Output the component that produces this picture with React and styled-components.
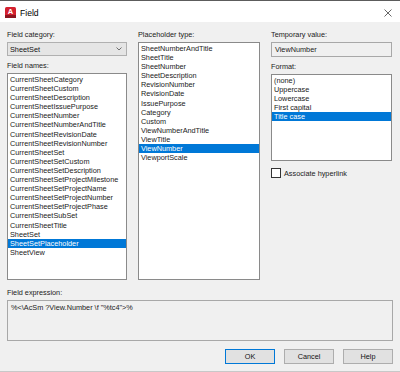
import React from "react";
import styled, { createGlobalStyle } from "styled-components";

const fieldNames = [
  "CurrentSheetCategory",
  "CurrentSheetCustom",
  "CurrentSheetDescription",
  "CurrentSheetIssuePurpose",
  "CurrentSheetNumber",
  "CurrentSheetNumberAndTitle",
  "CurrentSheetRevisionDate",
  "CurrentSheetRevisionNumber",
  "CurrentSheetSet",
  "CurrentSheetSetCustom",
  "CurrentSheetSetDescription",
  "CurrentSheetSetProjectMilestone",
  "CurrentSheetSetProjectName",
  "CurrentSheetSetProjectNumber",
  "CurrentSheetSetProjectPhase",
  "CurrentSheetSubSet",
  "CurrentSheetTitle",
  "SheetSet",
  "SheetSetPlaceholder",
  "SheetView",
];

const placeholderTypes = [
  "SheetNumberAndTitle",
  "SheetTitle",
  "SheetNumber",
  "SheetDescription",
  "RevisionNumber",
  "RevisionDate",
  "IssuePurpose",
  "Category",
  "Custom",
  "ViewNumberAndTitle",
  "ViewTitle",
  "ViewNumber",
  "ViewportScale",
];

const formats = ["(none)", "Uppercase", "Lowercase", "First capital", "Title case"];

function Field() {
  return (
    <Window>
      <GlobalStyle />
      <TitleBar>
        <AppIcon viewBox="0 0 11 11">
          <rect x="0" y="0" width="11" height="11" rx="1.5" fill="#d3202e" />
          <rect x="0" y="8" width="11" height="3" fill="#8c1520" />
          <text x="5.5" y="7.3" textAnchor="middle" fontSize="7.5" fontWeight="700" fill="#fff" fontFamily="Liberation Sans, sans-serif">
            A
          </text>
        </AppIcon>
        <Title>Field</Title>
        <CloseIcon viewBox="0 0 8 8">
          <path d="M0.5 0.5 L7.5 7.5 M7.5 0.5 L0.5 7.5" stroke="#555" strokeWidth="0.9" fill="none" />
        </CloseIcon>
      </TitleBar>

      <Body>
        <Columns>
          <Column>
            <Label>Field category:</Label>
            <Combo>
              <span>SheetSet</span>
              <Chevron viewBox="0 0 6 4">
                <path d="M0.5 0.5 L3 3 L5.5 0.5" stroke="#606060" strokeWidth="0.9" fill="none" />
              </Chevron>
            </Combo>
            <Label $top={5}>Field names:</Label>
            <ListBox $grow>
              {fieldNames.map((n) => (
                <Item key={n} $selected={n === "SheetSetPlaceholder"}>
                  {n}
                </Item>
              ))}
            </ListBox>
          </Column>

          <Column>
            <Label>Placeholder type:</Label>
            <ListBox $grow>
              {placeholderTypes.map((n) => (
                <Item key={n} $selected={n === "ViewNumber"}>
                  {n}
                </Item>
              ))}
            </ListBox>
          </Column>

          <Column>
            <Label>Temporary value:</Label>
            <ReadOnlyBox $height={15}>ViewNumber</ReadOnlyBox>
            <Label $top={5}>Format:</Label>
            <ListBox $height={87}>
              {formats.map((n) => (
                <Item key={n} $selected={n === "Title case"}>
                  {n}
                </Item>
              ))}
            </ListBox>
            <CheckRow>
              <CheckBox />
              <span>Associate hyperlink</span>
            </CheckRow>
          </Column>
        </Columns>

        <Label $top={8}>Field expression:</Label>
        <ReadOnlyBox $height={41}>%&lt;\AcSm ?View.Number \f "%tc4"&gt;%</ReadOnlyBox>

        <Buttons>
          <Button $default>OK</Button>
          <Button>Cancel</Button>
          <Button>Help</Button>
        </Buttons>
      </Body>
    </Window>
  );
}

export default Field;

const GlobalStyle = createGlobalStyle`
  body {
    margin: 0;
    background: #f0f0f0;
    font-family: "Liberation Sans", Arial, sans-serif;
  }
`;

const Window = styled.div`
  width: 400px;
  height: 372px;
  box-sizing: border-box;
  display: flex;
  flex-direction: column;
  background: #f0f0f0;
  border-top: 1px solid #5c5c5c;
  border-bottom: 1px solid #c8c8c8;
  font-family: "Liberation Sans", Arial, sans-serif;
  font-size: 7.3px;
  color: #1a1a1a;
`;

const TitleBar = styled.div`
  height: 21px;
  display: flex;
  align-items: center;
  padding: 0 8px 0 5px;
  background: #ffffff;
`;

const AppIcon = styled.svg`
  width: 11px;
  height: 11px;
  margin-top: 2px;
`;

const Title = styled.div`
  margin-left: 4px;
  margin-top: 2px;
  font-size: 8.6px;
  color: #000;
  flex: 1;
`;

const CloseIcon = styled.svg`
  width: 8px;
  height: 8px;
  margin-top: 2px;
`;

const Body = styled.div`
  flex: 1;
  display: flex;
  flex-direction: column;
  padding: 8px 7px 0 7px;
`;

const Columns = styled.div`
  height: 250px;
  display: grid;
  grid-template-columns: 120px 122px 121px;
  column-gap: 11px;
`;

const Column = styled.div`
  display: flex;
  flex-direction: column;
  min-height: 0;
`;

const Label = styled.div`
  height: 10px;
  line-height: 10px;
  margin-top: ${(p) => p.$top || 0}px;
  margin-bottom: 2px;
  color: #222;
  white-space: nowrap;
`;

const Combo = styled.div`
  height: 14px;
  box-sizing: border-box;
  display: flex;
  align-items: center;
  justify-content: space-between;
  padding: 0 4px 0 2px;
  background: #e5e5e5;
  border: 1px solid #b0b0b0;
  color: #111;
`;

const Chevron = styled.svg`
  width: 6px;
  height: 4px;
`;

const ListBox = styled.div`
  box-sizing: border-box;
  ${(p) => (p.$grow ? "flex: 1;" : `height: ${p.$height}px;`)}
  padding: 1px 0;
  background: #ffffff;
  border: 1px solid #8a8a8a;
  overflow: hidden;
`;

const Item = styled.div`
  height: 9.1px;
  line-height: 9.1px;
  padding-left: 2px;
  white-space: nowrap;
  color: ${(p) => (p.$selected ? "#ffffff" : "#1a1a1a")};
  background: ${(p) => (p.$selected ? "#0078d7" : "transparent")};
`;

const ReadOnlyBox = styled.div`
  height: ${(p) => p.$height}px;
  box-sizing: border-box;
  padding: 2px 3px;
  line-height: 9px;
  background: #f0f0f0;
  border: 1px solid #a8a8a8;
  color: #222;
  white-space: nowrap;
`;

const CheckRow = styled.div`
  margin-top: 7px;
  display: flex;
  align-items: center;
  gap: 3px;
  color: #222;
`;

const CheckBox = styled.div`
  width: 10px;
  height: 10px;
  box-sizing: border-box;
  background: #ffffff;
  border: 1px solid #333333;
`;

const Buttons = styled.div`
  margin-top: 8px;
  display: flex;
  justify-content: flex-end;
  gap: 9px;
`;

const Button = styled.div`
  width: 50px;
  height: 15px;
  box-sizing: border-box;
  display: flex;
  align-items: center;
  justify-content: center;
  background: #e1e1e1;
  border: 1px solid ${(p) => (p.$default ? "#0078d7" : "#adadad")};
  color: #111;
`;
